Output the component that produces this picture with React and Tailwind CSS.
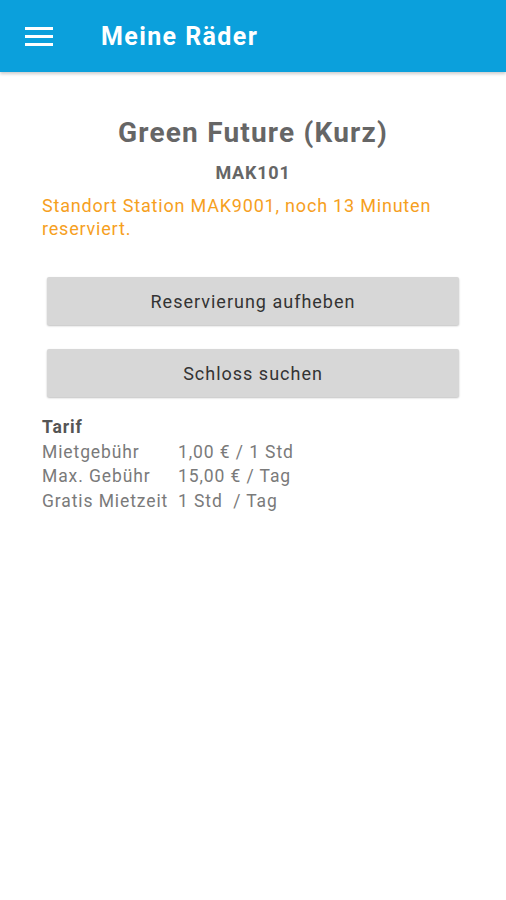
export default function App() {
  return (
    <div className="min-h-screen w-full bg-white font-['Roboto',sans-serif]">
      <header className="h-[72px] bg-[#0ba0dc] flex items-center shadow-[0_2px_3px_rgba(0,0,0,0.2)]">
        <div className="w-[28px] ml-[25px] flex flex-col gap-[5px]">
          <span className="h-[3px] bg-white block" />
          <span className="h-[3px] bg-white block" />
          <span className="h-[3px] bg-white block" />
        </div>
        <h1 className="ml-[48px] mt-[2px] text-white text-[25px] font-bold tracking-[1.4px]">Meine Räder</h1>
      </header>

      <main className="px-[42px] pt-[43px]">
        <h2 className="text-center text-[28px] font-bold text-[#666666] leading-[36px] tracking-[1.2px]">Green Future (Kurz)</h2>
        <p className="text-center text-[18px] font-bold text-[#666666] mt-[11px] leading-[22px] tracking-[0.8px]">MAK101</p>
        <p className="text-[18px] text-[#f6a01e] mt-[11px] leading-[22.5px] tracking-[0.8px]">
          Standort Station MAK9001, noch 13 Minuten reserviert.
        </p>

        <div className="flex flex-col gap-[24px] mt-[37px] px-[5px]">
          <button className="h-[48px] w-full bg-[#d7d7d7] rounded-[2px] shadow-[0_1px_2px_rgba(0,0,0,0.25)] text-[18px] tracking-[1px] text-[#333333]">
            Reservierung aufheben
          </button>
          <button className="h-[48px] w-full bg-[#d7d7d7] rounded-[2px] shadow-[0_1px_2px_rgba(0,0,0,0.25)] text-[18px] tracking-[1px] text-[#333333]">
            Schloss suchen
          </button>
        </div>

        <div className="mt-[18px] text-[17.5px] leading-[24.5px] tracking-[0.9px]">
          <p className="font-bold text-[#555555]">Tarif</p>
          <div className="grid grid-cols-[136px_1fr] text-[#7a7a7a]">
            <span>Mietgebühr</span>
            <span>1,00 € / 1 Std</span>
            <span>Max. Gebühr</span>
            <span>15,00 € / Tag</span>
            <span>Gratis Mietzeit</span>
            <span className="whitespace-pre">1 Std  / Tag</span>
          </div>
        </div>
      </main>
    </div>
  )
}
